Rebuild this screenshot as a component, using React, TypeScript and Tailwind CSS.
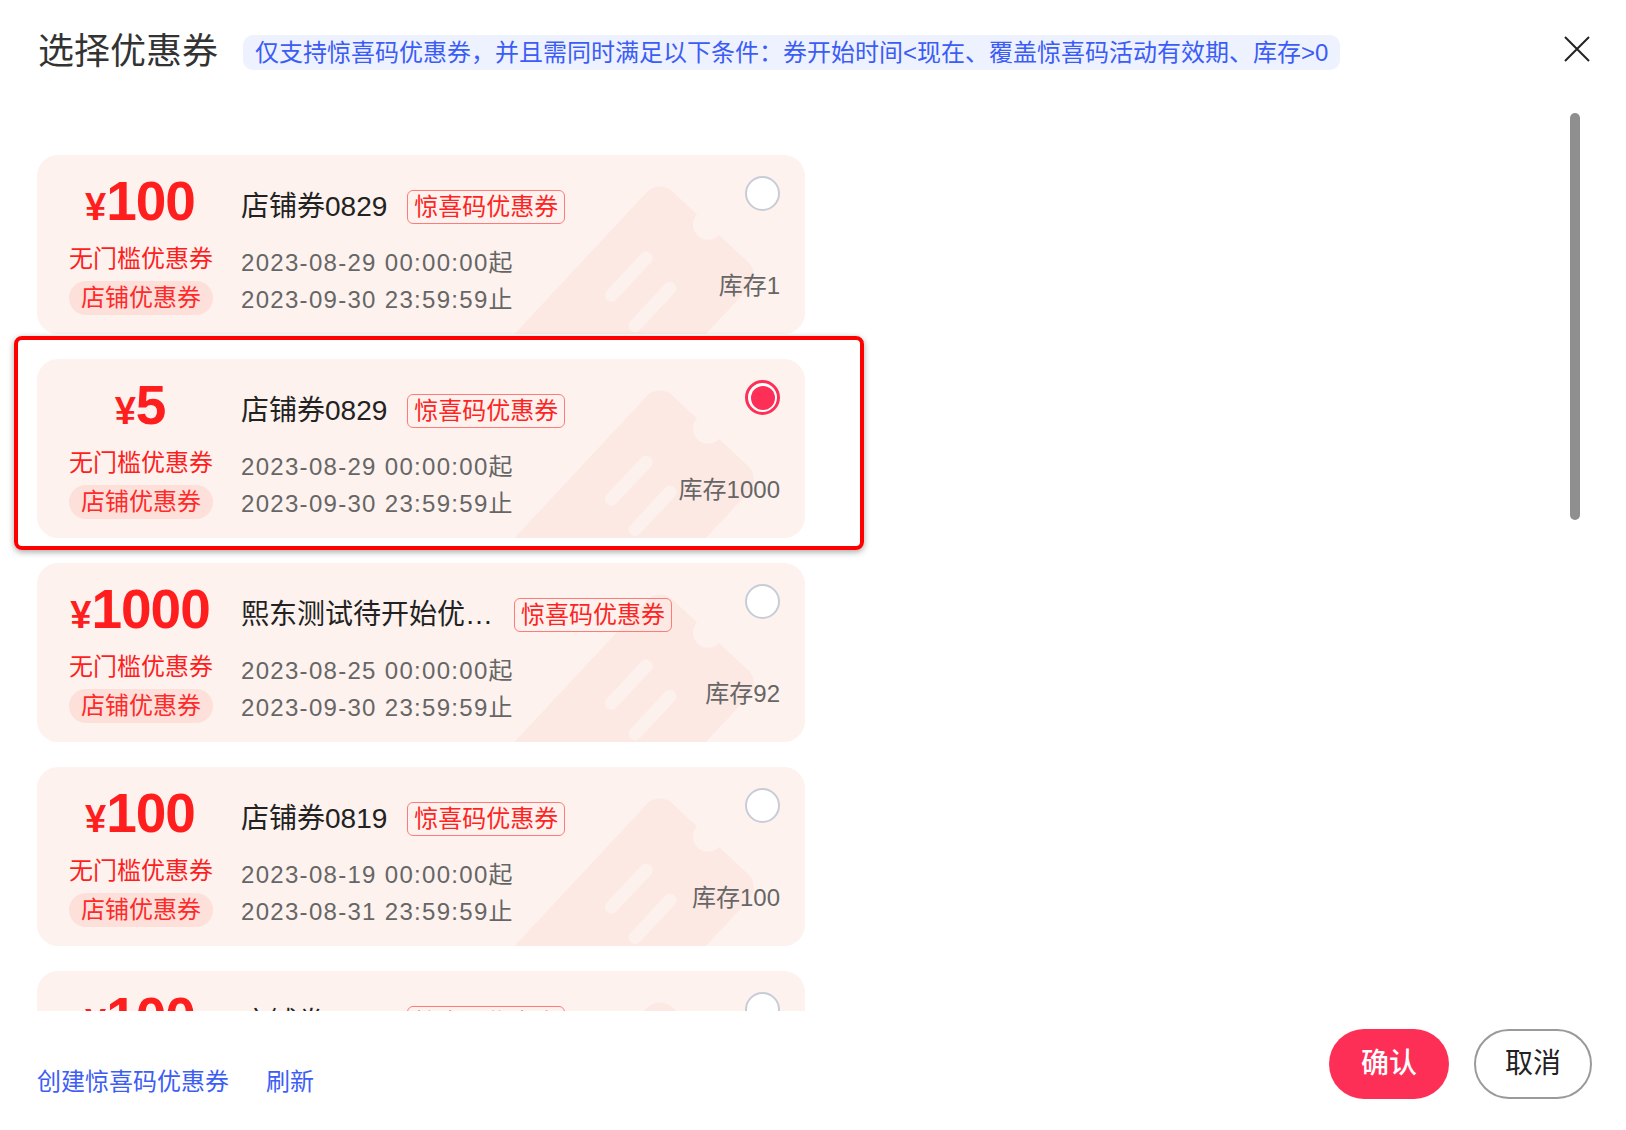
type Coupon = {
  amount: string
  name: string
  start: string
  end: string
  stock: number
  selected?: boolean
}

const coupons: Coupon[] = [
  { amount: '100', name: '店铺券0829', start: '2023-08-29 00:00:00起', end: '2023-09-30 23:59:59止', stock: 1 },
  { amount: '5', name: '店铺券0829', start: '2023-08-29 00:00:00起', end: '2023-09-30 23:59:59止', stock: 1000, selected: true },
  { amount: '1000', name: '熙东测试待开始优惠券', start: '2023-08-25 00:00:00起', end: '2023-09-30 23:59:59止', stock: 92 },
  { amount: '100', name: '店铺券0819', start: '2023-08-19 00:00:00起', end: '2023-08-31 23:59:59止', stock: 100 },
  { amount: '100', name: '店铺券0818', start: '2023-08-18 00:00:00起', end: '2023-08-31 23:59:59止', stock: 100 },
]

// faint ticket drawn behind the card content
function TicketMark() {
  return (
    <svg className="pointer-events-none absolute left-0 top-0" width="768" height="179" viewBox="0 0 768 179">
      <g transform="translate(622 24) rotate(43)">
        <path
          d="M18 0 H52 A15 15 0 0 0 82 0 H122 A18 18 0 0 1 140 18 V300 H0 V18 A18 18 0 0 1 18 0 Z"
          fill="#fce9e3"
        />
        <rect x="38" y="60" width="13" height="64" rx="6.5" fill="#fdf1ed" />
        <rect x="76" y="66" width="13" height="64" rx="6.5" fill="#fdf1ed" />
      </g>
    </svg>
  )
}

function Radio({ checked }: { checked?: boolean }) {
  if (checked) {
    return (
      <div className="flex h-[35px] w-[35px] items-center justify-center rounded-full border-[3px] border-[#fe2f57] bg-white">
        <div className="h-[24px] w-[24px] rounded-full bg-[#fe2f57]" />
      </div>
    )
  }
  return <div className="h-[35px] w-[35px] rounded-full border-2 border-[#c7ccd6] bg-white" />
}

function CouponCard({ c }: { c: Coupon }) {
  return (
    <div className="relative ml-[37px] h-[179px] w-[768px] shrink-0">
      <div className="relative flex h-full overflow-hidden rounded-[21px] bg-[#fdf2ee]">
        <TicketMark />
        <div className="relative flex w-[204px] shrink-0 flex-col items-center pl-[2px] pt-[18px]">
          <div className="flex h-[56px] items-baseline font-bold text-[#ff1e1e]">
            <span className="text-[38px] leading-[56px]">¥</span>
            <span className="text-[55px] leading-[56px] tracking-[-1px]">{c.amount}</span>
          </div>
          <div className="mt-[13px] pl-[2px] text-[24px] leading-[34px] text-[#ff1e1e]">无门槛优惠券</div>
          <div className="mt-[5px] ml-[2px] h-[34px] rounded-full bg-[#fde0da] px-[12px] text-[24px] leading-[34px] text-[#ff2a2a]">
            店铺优惠券
          </div>
        </div>
        <div className="relative flex min-w-0 flex-1 flex-col pt-[35px]">
          <div className="flex h-[34px] items-center gap-[20px]">
            <span className="max-w-[253px] truncate text-[28px] leading-[34px] text-[#222]">{c.name}</span>
            <span className="h-[34px] shrink-0 rounded-[6px] border border-[#ff7b7b] px-[6px] text-[24px] leading-[32px] text-[#ff2424]">
              惊喜码优惠券
            </span>
          </div>
          <div className="mt-[20px] text-[24px] leading-[37px] tracking-[1.3px] text-[#666]">
            <div>{c.start}</div>
            <div>{c.end}</div>
          </div>
        </div>
        <div className="relative flex flex-col items-end pr-[25px] pt-[21px]">
          <Radio checked={c.selected} />
          <div className="mt-[58px] whitespace-nowrap text-[24px] leading-[34px] text-[#666]">库存{c.stock}</div>
        </div>
      </div>
      {c.selected && (
        <div className="pointer-events-none absolute -bottom-[12px] -left-[23px] -right-[59px] -top-[23px] rounded-[8px] border-4 border-[#ff0000] shadow-[0_2px_6px_rgba(0,0,0,0.35)]" />
      )}
    </div>
  )
}

export default function App() {
  return (
    <div className="relative flex h-[1130px] w-[1626px] flex-col overflow-hidden bg-white font-['Liberation_Sans','Noto_Sans_CJK_SC',sans-serif]">
      <header className="flex h-[104px] shrink-0 items-center pl-[38px] pr-[36px]">
        <h1 className="text-[36px] font-normal leading-[44px] text-[#333]">选择优惠券</h1>
        <div className="ml-[25px] h-[35px] rounded-[10px] bg-[#edf2fe] px-[12px] text-[24px] leading-[35px] text-[#3c5cf6]">
          仅支持惊喜码优惠券，并且需同时满足以下条件：券开始时间&lt;现在、覆盖惊喜码活动有效期、库存&gt;0
        </div>
        <button type="button" className="mb-[6px] ml-auto text-[#222]">
          <svg width="26" height="26" viewBox="0 0 26 26" fill="none" stroke="currentColor" strokeWidth="2">
            <path d="M1 1 L25 25 M25 1 L1 25" />
          </svg>
        </button>
      </header>

      <div className="relative h-[907px] shrink-0 overflow-hidden">
        <div className="flex flex-col gap-[25px] pt-[51px]">
          {coupons.map((c, i) => (
            <CouponCard key={i} c={c} />
          ))}
        </div>
        <div className="absolute left-[1570px] top-[9px] h-[407px] w-[10px] rounded-full bg-[#8f8f8f]" />
      </div>

      <footer className="flex flex-1 items-end justify-between pb-[31px] pl-[37px] pr-[34px]">
        <div className="flex gap-[37px] text-[24px] leading-[34px] text-[#3d5df5]">
          <span>创建惊喜码优惠券</span>
          <span>刷新</span>
        </div>
        <div className="flex gap-[25px]">
          <button type="button" className="h-[70px] w-[120px] rounded-full bg-[#fe2f57] text-[28px] font-medium text-white">
            确认
          </button>
          <button type="button" className="h-[70px] w-[118px] rounded-full border-2 border-[#9a9a9a] text-[28px] text-[#222]">
            取消
          </button>
        </div>
      </footer>
    </div>
  )
}
